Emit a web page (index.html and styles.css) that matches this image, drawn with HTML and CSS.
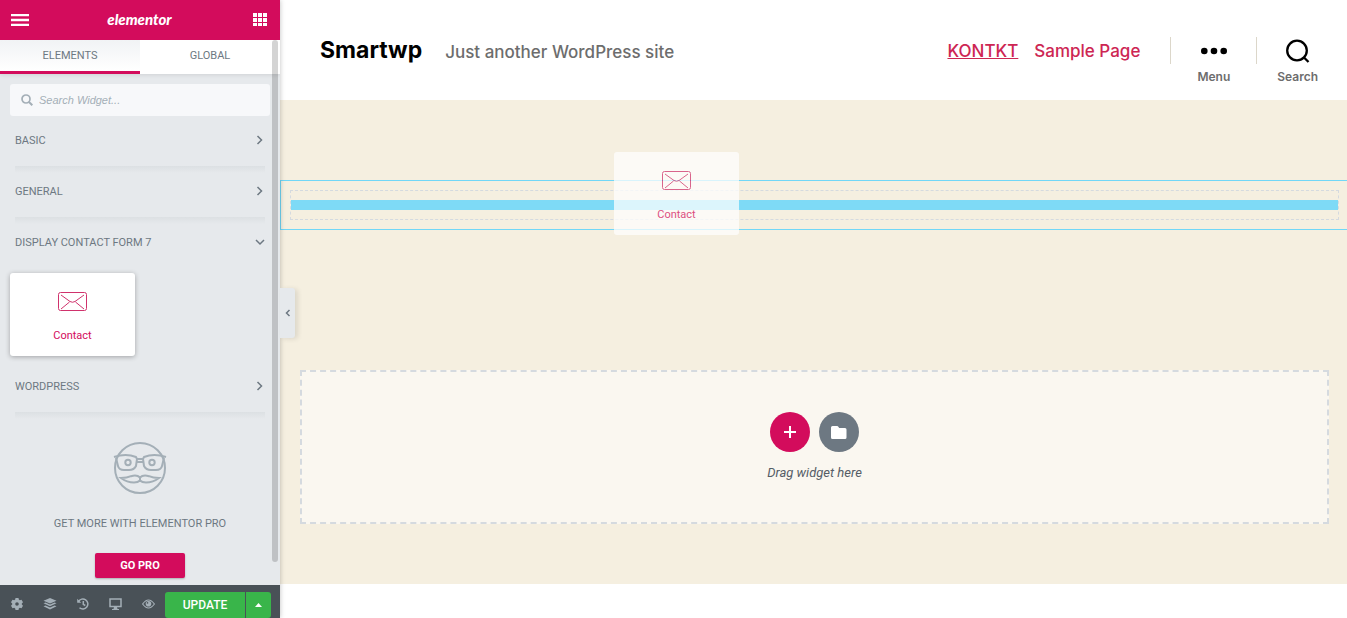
FILE: index.html
```html
<!DOCTYPE html>
<html lang="en">
<head>
<meta charset="utf-8">
<meta name="viewport" content="width=device-width, initial-scale=1">
<title>Elementor</title>
<link rel="stylesheet" href="styles.css">
</head>
<body>
<aside class="panel">
  <header class="panel-header">
    <button class="icon-button" aria-label="Menu"><svg width="18" height="12" viewBox="0 0 18 12"><path d="M0 1h18M0 6h18M0 11h18" stroke="#fff" stroke-width="2.400"/></svg></button>
    <span class="brand">elementor</span>
    <button class="icon-button" aria-label="Widgets"><svg width="14" height="14" viewBox="0 0 14 14" fill="#fff"><path d="M0 0h4v4H0zM5 0h4v4H5zM10 0h4v4h-4zM0 5h4v4H0zM5 5h4v4H5zM10 5h4v4h-4zM0 10h4v3H0zM5 10h4v3H5zM10 10h4v3h-4z"/></svg></button>
  </header>
  <div class="panel-body">
    <nav class="tabs">
      <button class="tab tab-active">ELEMENTS</button>
      <button class="tab">GLOBAL</button>
    </nav>
    <label class="search">
      <svg width="12" height="12" viewBox="0 0 12 12" fill="none" stroke="#a4afb7"><circle cx="5" cy="5" r="4" stroke-width="1.700"/><path d="M8 8l3.300 3.300" stroke-width="2"/></svg>
      <input class="search-input" type="text" placeholder="Search Widget..." aria-label="Search Widget">
    </label>
    <button class="category">BASIC<svg class="chevron" width="10" height="10" viewBox="0 0 10 10"><path d="M2.500 1l4 4-4 4"/></svg></button>
    <div class="divider"></div>
    <button class="category">GENERAL<svg class="chevron" width="10" height="10" viewBox="0 0 10 10"><path d="M2.500 1l4 4-4 4"/></svg></button>
    <div class="divider"></div>
    <button class="category">DISPLAY CONTACT FORM 7<svg class="chevron" width="10" height="10" viewBox="0 0 10 10"><path d="M1 3l4 4 4-4"/></svg></button>
    <div class="widgets">
      <div class="widget">
        <svg class="envelope" width="29" height="20" viewBox="0 0 29 20"><rect x=".5" y=".5" width="28" height="18" rx="2"/><path d="M3 3l9 6.500q2.500 1.500 5 0L26 3M3 17l8.500-7M26 17l-8.500-7"/></svg>
        <span>Contact</span>
      </div>
    </div>
    <button class="category">WORDPRESS<svg class="chevron" width="10" height="10" viewBox="0 0 10 10"><path d="M2.500 1l4 4-4 4"/></svg></button>
    <div class="divider"></div>
    <div class="promo">
      <svg width="54" height="54" viewBox="0 0 54 54" fill="none" stroke="#a4afb7" stroke-width="2"><circle cx="27" cy="27" r="25"/><path d="M1 16q12-4 22 0l1 2h6l1-2q10-4 22 0M3 17l2 8q1 4 6 4h5q5 0 7-4l1-7M51 17l-2 8q-1 4-6 4h-5q-5 0-7-4l-1-7M24 21h6"/><circle cx="15" cy="21.500" r="2.700"/><circle cx="39" cy="21.500" r="2.700"/><path d="M8 37q6 0 10-1.800 6-1.700 9 1.300 3-3 9-1.300Q40 37 46 37q-6 4.500-13 4.500-4 0-6-2-2 2-6 2Q14 41.500 8 37zM27 36.500v3"/></svg>
      <p class="promo-text">GET MORE WITH ELEMENTOR PRO</p>
      <button class="go-pro">GO PRO</button>
    </div>
    <div class="scrollbar"></div>
  </div>
  <footer class="panel-footer">
    <button class="tool" aria-label="Settings"><svg width="12" height="12" viewBox="0 0 12 12"><path fill="#a4afb7" fill-rule="evenodd" d="M4.500 0h3l.3 1.600 1 .6 1.700-.5L12 4.300l-1.200 1.100v1.200L12 7.700l-1.500 2.600-1.700-.5-1 .6L7.500 12h-3l-.3-1.600-1-.6-1.700.5L0 7.700l1.200-1.100V5.400L0 4.300l1.500-2.600 1.700.5 1-.6zM6 4.200a1.800 1.800 0 1 0 0 3.600 1.800 1.800 0 0 0 0-3.600z"/></svg></button>
    <button class="tool" aria-label="Navigator"><svg width="14" height="12" viewBox="0 0 14 12" fill="#a4afb7"><path d="M7 0l6.500 2.700L7 5.500.5 2.700zM.5 5.200l2-.8L7 6.400l4.500-2 2 .8L7 8.300zM.5 8.300l2-.9L7 9.400l4.500-2 2 .9L7 11.600z"/></svg></button>
    <button class="tool" aria-label="History"><svg width="12" height="12" viewBox="0 0 12 12" fill="none" stroke="#a4afb7" stroke-width="1.500"><path d="M1.500 3.500A5 5 0 1 1 2.500 9.700M6.300 3v3.300l2 1.200"/><path d="M.2.800v4h4z" fill="#a4afb7" stroke="none"/></svg></button>
    <button class="tool" aria-label="Responsive mode"><svg width="13" height="12" viewBox="0 0 13 12"><path d="M1 1h11v7.500H1z" fill="none" stroke="#a4afb7" stroke-width="1.500"/><path d="M5 9h3l.5 2H10v1H3v-1h1.500z" fill="#a4afb7"/></svg></button>
    <button class="tool" aria-label="Preview"><svg width="13" height="10" viewBox="0 0 13 10"><path d="M.6 5q5.900-8 11.800 0-5.900 8-11.800 0z" fill="none" stroke="#a4afb7" stroke-width="1.200"/><circle cx="6.500" cy="4.800" r="2.800" fill="#a4afb7"/><circle cx="5.500" cy="3.900" r=".8" fill="#495157"/></svg></button>
    <button class="update">UPDATE</button>
    <button class="update-more" aria-label="Save options"><svg width="7" height="4" viewBox="0 0 7 4"><path d="M0 4l3.500-4L7 4z" fill="#fff"/></svg></button>
  </footer>
  <button class="collapse" aria-label="Hide panel"><svg width="6" height="8" viewBox="0 0 6 8"><path d="M4.500 1l-3 3 3 3" fill="none" stroke="#6d7882" stroke-width="1.500"/></svg></button>
</aside>
<main class="preview">
  <header class="site-header">
    <a class="site-title" href="#">Smartwp</a>
    <span class="tagline">Just another WordPress site</span>
    <nav class="site-nav">
      <a class="nav-link nav-current" href="#">KONTKT</a>
      <a class="nav-link" href="#">Sample Page</a>
    </nav>
    <div class="toggle-cell">
      <button class="toggle"><svg width="26" height="26" viewBox="0 0 26 26"><circle cx="3.300" cy="13" r="3.300"/><circle cx="13" cy="13" r="3.300"/><circle cx="22.700" cy="13" r="3.300"/></svg>Menu</button>
    </div>
    <div class="toggle-cell toggle-last">
      <button class="toggle"><svg width="26" height="26" viewBox="0 0 26 26" fill="none" stroke="#000" stroke-width="2.300"><circle cx="12" cy="12.500" r="9.800"/><path d="M19 19.500l4.500 4.500"/></svg>Search</button>
    </div>
  </header>
  <div class="canvas">
    <section class="section"><div class="column"><div class="placeholder"></div></div></section>
    <section class="drop-area">
      <div class="actions">
        <button class="round add" aria-label="Add section"><svg width="12" height="12" viewBox="0 0 12 12"><path d="M6 0v12M0 6h12" stroke="#fff" stroke-width="2"/></svg></button>
        <button class="round" aria-label="Add template"><svg width="16" height="13" viewBox="0 0 16 13"><path d="M1.500 0H6q1 0 1.500 1l.7 1H14q1.500 0 1.500 1.500v8Q15.500 13 14 13H1.500Q0 13 0 11.500v-10Q0 0 1.500 0z" fill="#fff"/></svg></button>
      </div>
      <p class="drop-text">Drag widget here</p>
    </section>
    <div class="widget dragged">
      <svg class="envelope" width="29" height="20" viewBox="0 0 29 20"><rect x=".5" y=".5" width="28" height="18" rx="2"/><path d="M3 3l9 6.500q2.500 1.500 5 0L26 3M3 17l8.500-7M26 17l-8.500-7"/></svg>
      <span>Contact</span>
    </div>
  </div>
</main>
</body>
</html>
```
FILE: styles.css
```css
* { box-sizing: border-box; }
body {
  margin: 0;
  display: flex;
  height: 100vh;
  overflow: hidden;
  background: #fff;
  font-family: Roboto, "Liberation Sans", sans-serif;
  font-size: 11px;
  color: #6d7882;
}
button {
  margin: 0;
  padding: 0;
  border: 0;
  background: none;
  font: inherit;
  color: inherit;
}
svg { display: block; flex: none; }
p { margin: 0; }

.panel {
  position: relative;
  z-index: 1;
  flex: none;
  width: 280px;
  display: flex;
  flex-direction: column;
  background: #e6e9ec;
  box-shadow: 0 0 5px rgba(0, 0, 0, .25);
}
.panel-header {
  flex: none;
  height: 40px;
  padding: 0 13px 0 11px;
  display: flex;
  align-items: center;
  justify-content: space-between;
  background: #d30c5c;
}
.brand {
  padding: 0 3px 3px 0;
  font-family: Lato, sans-serif;
  font-size: 15px;
  font-style: italic;
  font-weight: 900;
  color: #fff;
}
.panel-body {
  position: relative;
  flex: 1;
  min-height: 0;
  overflow: hidden;
}
.tabs {
  display: flex;
  height: 34px;
  background: #fff;
  box-shadow: 0 1px 4px rgba(0, 0, 0, .1);
}
.tab {
  flex: 1;
  border-bottom: 3px solid transparent;
}
.tab-active {
  background: linear-gradient(#f1f3f5, #fff);
  border-bottom-color: #d30c5c;
}
.search {
  display: flex;
  align-items: center;
  gap: 6px;
  height: 32px;
  margin: 10px 10px 0;
  padding: 0 11px;
  background: #f7f8fa;
  border-radius: 3px;
}
.search-input {
  flex: 1;
  min-width: 0;
  padding: 0;
  border: 0;
  outline: 0;
  background: none;
  font: italic 11px "Liberation Sans", sans-serif;
}
.search-input::placeholder { color: #a4afb7; }
.category {
  display: flex;
  width: 100%;
  height: 50px;
  padding: 0 15px 2px;
  align-items: center;
  justify-content: space-between;
}
.chevron {
  fill: none;
  stroke: #6d7882;
  stroke-width: 1.500;
}
.divider {
  height: 7px;
  margin: 0 15px -6px;
  background: linear-gradient(#dce0e3, #e6e9ec);
}
.widgets { padding: 5px 10px 6px; }
.widget {
  width: 125px;
  height: 83px;
  padding-top: 19px;
  display: flex;
  flex-direction: column;
  align-items: center;
  gap: 17px;
  border-radius: 3px;
  background: #fff;
  box-shadow: 0 1px 5px rgba(0, 0, 0, .3);
  line-height: 13px;
  color: #d30c5c;
}
.envelope { fill: none; stroke: #d0326c; }
.promo {
  padding-top: 28px;
  display: flex;
  flex-direction: column;
  align-items: center;
}
.promo-text { margin: 22px 0 23px; line-height: 13px; }
.go-pro {
  width: 90px;
  height: 25px;
  border-radius: 2px;
  background: #d30c5c;
  box-shadow: 0 1px 2px rgba(0, 0, 0, .25);
  color: #fff;
  font-weight: 700;
}
.scrollbar {
  position: absolute;
  top: 0;
  right: 2px;
  bottom: 23px;
  width: 6px;
  border-radius: 3px;
  background: rgba(0, 0, 0, .17);
}
.panel-footer {
  flex: none;
  height: 33px;
  display: flex;
  align-items: flex-end;
  padding-right: 9px;
  background: #495157;
}
.tool {
  flex: 1;
  height: 28px;
  display: grid;
  place-items: center;
}
.update {
  width: 80px;
  height: 26px;
  border-radius: 3px 0 0 3px;
  background: #39b54a;
  color: #fff;
  font-size: 12px;
  font-weight: 500;
}
.update-more {
  width: 25px;
  height: 26px;
  margin-left: 1px;
  display: grid;
  place-items: center;
  border-radius: 0 3px 3px 0;
  background: #39b54a;
}
.collapse {
  position: absolute;
  top: 288px;
  left: 100%;
  width: 15px;
  height: 50px;
  display: grid;
  place-items: center;
  border-radius: 0 3px 3px 0;
  background: #e6e9ec;
  box-shadow: 3px 1px 5px rgba(0, 0, 0, .1);
}

.preview {
  flex: 1;
  min-width: 0;
  font-family: Inter, sans-serif;
}
.site-header {
  display: flex;
  align-items: center;
  height: 100px;
  padding: 0 29px 0 40px;
}
.site-title {
  font-size: 23px;
  font-weight: 700;
  color: #000;
  text-decoration: none;
}
.tagline {
  margin-left: 23px;
  padding-top: 3px;
  font-size: 17px;
  font-weight: 500;
  color: #6d6d6d;
}
.site-nav {
  display: flex;
  gap: 16px;
  margin-left: auto;
  padding-top: 2px;
}
.nav-link {
  font-size: 17px;
  font-weight: 500;
  color: #cd2653;
  text-decoration: none;
}
.nav-current { text-decoration: underline; }
.toggle-cell {
  display: flex;
  height: 27px;
  margin-left: 30px;
  padding: 0 26px;
  border-left: 1px solid #dcd7ca;
}
.toggle-last {
  margin-left: 0;
  padding: 0 0 0 20px;
}
.toggle {
  display: flex;
  flex-direction: column;
  align-items: center;
  gap: 5px;
  height: 48px;
  padding-top: 1px;
  font-size: 12px;
  font-weight: 600;
  line-height: 16px;
  color: #6d6d6d;
}
.canvas {
  position: relative;
  padding: 80px 0 60px;
  background: #f5efe0;
}
.section {
  padding: 9px 8px 9px 9px;
  border: 1px solid #71d7f7;
  border-right: 0;
}
.column {
  padding: 9px 0;
  border: 1px dashed #d5dadf;
}
.placeholder { height: 10px; background: #7edaf6; }
.drop-area {
  margin: 140px 18px 0 20px;
  padding: 40px 0;
  border: 2px dashed #d5dadf;
  background: rgba(255, 255, 255, .5);
}
.actions {
  display: flex;
  justify-content: center;
  gap: 9px;
}
.round {
  width: 40px;
  height: 40px;
  display: grid;
  place-items: center;
  border-radius: 50%;
  background: #6d7882;
}
.add { background: #d30c5c; }
.drop-text {
  margin-top: 12px;
  text-align: center;
  font: italic 13px/18px Roboto, sans-serif;
  color: #555d66;
}
.dragged {
  position: absolute;
  top: 52px;
  left: 334px;
  box-shadow: none;
  opacity: .73;
  font-family: Roboto, sans-serif;
}
```
